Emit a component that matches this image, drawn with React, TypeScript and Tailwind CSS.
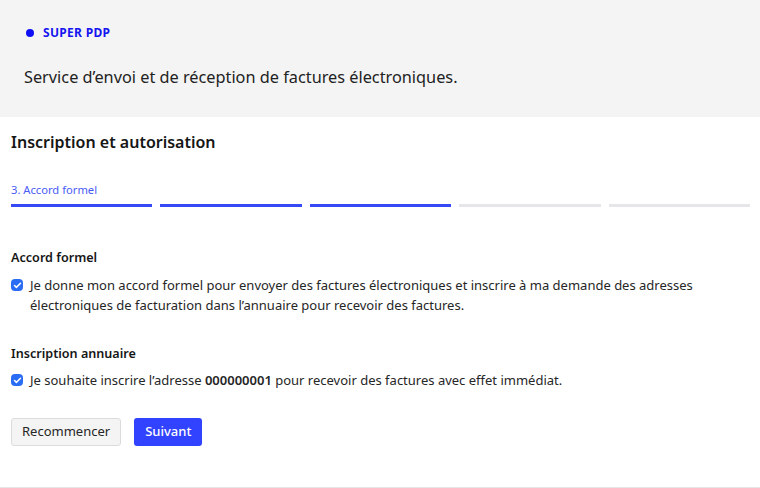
import { Check } from "lucide-react";

const steps = [true, true, true, false, false];

function CheckItem({ children }: { children: React.ReactNode }) {
  return (
    <div className="flex items-start gap-[7px]">
      <span className="mt-[4px] flex size-[12px] shrink-0 items-center justify-center rounded-[4px] bg-[#2a6df4]">
        <Check className="size-[9px] text-white" strokeWidth={4} />
      </span>
      <p className="text-[13px] leading-[20px] text-[#262626]">{children}</p>
    </div>
  );
}

export default function App() {
  return (
    <div className="w-[760px] h-[488px] bg-white font-['Noto_Sans',sans-serif] flex flex-col">
      <header className="bg-[#f4f4f4] h-[117px] px-[26px] pt-[24px]">
        <div className="flex items-center gap-[9px] h-[18px]">
          <span className="size-[8px] rounded-full bg-[#0f0ff5]" />
          <span className="text-[12px] font-bold tracking-[0.3px] text-[#1515f0]">SUPER PDP</span>
        </div>
        <p className="mt-[23px] -ml-[2px] text-[16.3px] leading-[24px] text-[#222]">
          Service d’envoi et de réception de factures électroniques.
        </p>
      </header>

      <main className="flex-1 px-[11px] pr-[10px] pt-[13px] border-b border-[#e6e6e6]">
        <h1 className="text-[16px] leading-[24px] font-semibold text-[#161616]">Inscription et autorisation</h1>

        <div className="mt-[28px] text-[11.2px] leading-[16px] text-[#4a5cf5]">3. Accord formel</div>
        <div className="mt-[6px] grid grid-cols-5 gap-[8px]">
          {steps.map((done, i) => (
            <div key={i} className={`h-[3px] ${done ? "bg-[#3549f5]" : "bg-[#e6e6ea]"}`} />
          ))}
        </div>

        <section className="mt-[42px]">
          <h2 className="text-[12.6px] leading-[18px] font-semibold text-[#161616]">Accord formel</h2>
          <div className="mt-[8px]">
            <CheckItem>
              Je donne mon accord formel pour envoyer des factures électroniques et inscrire à ma demande des adresses
              électroniques de facturation dans l’annuaire pour recevoir des factures.
            </CheckItem>
          </div>
        </section>

        <section className="mt-[30px]">
          <h2 className="text-[12.6px] leading-[18px] font-semibold text-[#161616]">Inscription annuaire</h2>
          <div className="mt-[7px]">
            <CheckItem>
              Je souhaite inscrire l’adresse <strong className="font-semibold">000000001</strong> pour recevoir des
              factures avec effet immédiat.
            </CheckItem>
          </div>
        </section>

        <div className="mt-[28px] flex gap-[13px]">
          <button className="h-[28px] px-[10px] rounded-[3px] border border-[#dcdcdc] bg-[#f4f4f4] text-[13px] text-[#262626]">
            Recommencer
          </button>
          <button className="h-[28px] px-[11px] rounded-[3px] bg-[#3143ff] text-[13px] font-medium text-white">
            Suivant
          </button>
        </div>
      </main>
    </div>
  );
}
